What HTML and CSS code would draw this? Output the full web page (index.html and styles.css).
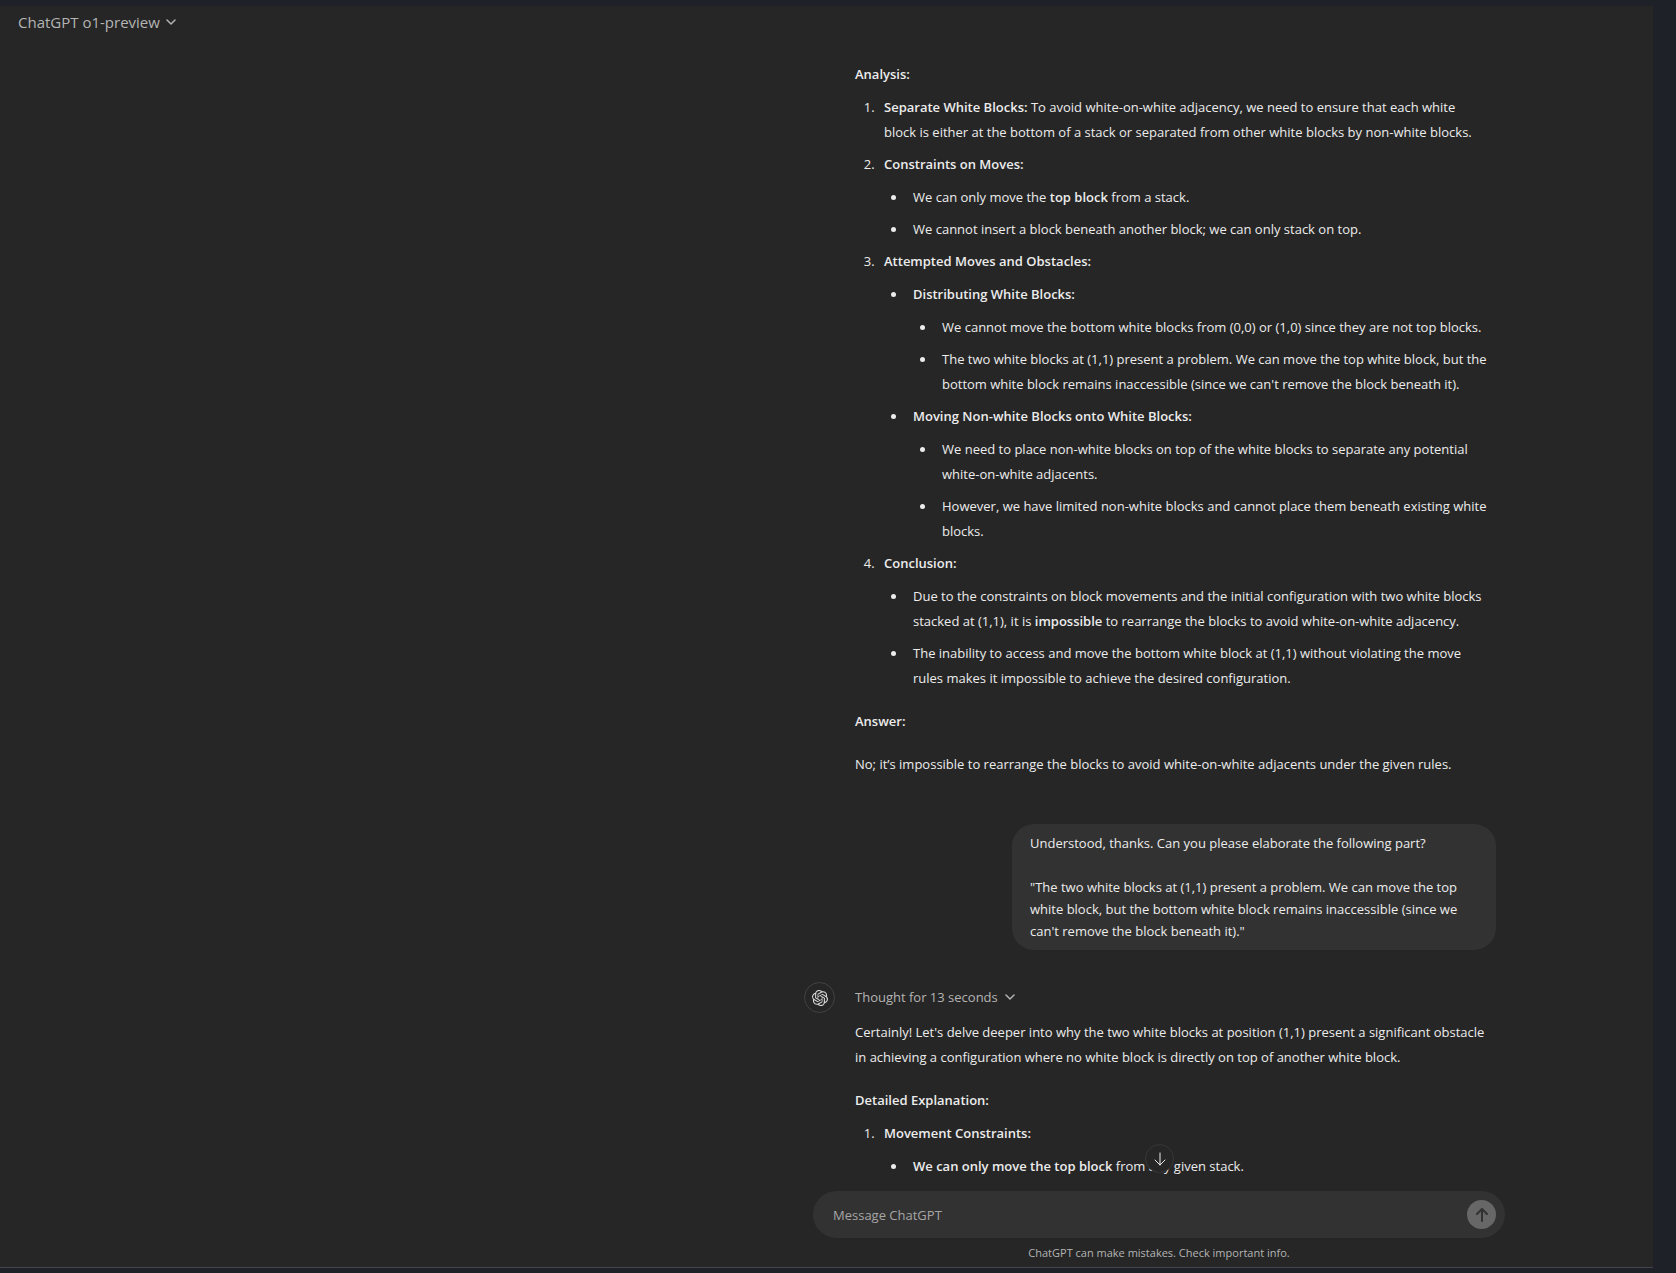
FILE: index.html
```
<!DOCTYPE html>
<html lang="en">
<head>
    <meta charset="UTF-8">
    <meta name="viewport" content="width=device-width, initial-scale=1.0">
    <title>ChatGPT</title>
    <link rel="stylesheet" href="styles.css">
</head>
<body>
    <div class="app">
        <header>
            <button class="model-btn" type="button">
                ChatGPT o1-preview
                <svg class="chevron" viewBox="0 0 10 6"><path d="M1 1l4 4 4-4"/></svg>
            </button>
        </header>
        <main class="thread">
            <article class="answer">
                <p><strong>Analysis:</strong></p>
                <ol>
                    <li><strong>Separate White Blocks:</strong> To avoid white-on-white adjacency, we need to ensure that each white<br>block is either at the bottom of a stack or separated from other white blocks by non-white blocks.</li>
                    <li><strong>Constraints on Moves:</strong>
                        <ul>
                            <li>We can only move the <strong>top block</strong> from a stack.</li>
                            <li>We cannot insert a block beneath another block; we can only stack on top.</li>
                        </ul>
                    </li>
                    <li><strong>Attempted Moves and Obstacles:</strong>
                        <ul>
                            <li><strong>Distributing White Blocks:</strong>
                                <ul>
                                    <li>We cannot move the bottom white blocks from (0,0) or (1,0) since they are not top blocks.</li>
                                    <li>The two white blocks at (1,1) present a problem. We can move the top white block, but the bottom white block remains inaccessible (since we can't remove the block beneath it).</li>
                                </ul>
                            </li>
                            <li><strong>Moving Non-white Blocks onto White Blocks:</strong>
                                <ul>
                                    <li>We need to place non-white blocks on top of the white blocks to separate any potential white-on-white adjacents.</li>
                                    <li>However, we have limited non-white blocks and cannot place them beneath existing white blocks.</li>
                                </ul>
                            </li>
                        </ul>
                    </li>
                    <li><strong>Conclusion:</strong>
                        <ul>
                            <li>Due to the constraints on block movements and the initial configuration with two white blocks stacked at (1,1), it is <strong>impossible</strong> to rearrange the blocks to avoid white-on-white adjacency.</li>
                            <li>The inability to access and move the bottom white block at (1,1) without violating the move<br>rules makes it impossible to achieve the desired configuration.</li>
                        </ul>
                    </li>
                </ol>
                <p><strong>Answer:</strong></p>
                <p>No; it’s impossible to rearrange the blocks to avoid white-on-white adjacents under the given rules.</p>
            </article>
            <article class="question">
                <p>Understood, thanks. Can you please elaborate the following part?</p>
                <p>"The two white blocks at (1,1) present a problem. We can move the top white block, but the bottom white block remains inaccessible (since we can't remove the block beneath it)."</p>
            </article>
            <div class="reply">
                <div class="avatar">
                    <svg viewBox="0 0 24 24"><path d="M22.2819 9.8211a5.9847 5.9847 0 0 0-.5157-4.9108 6.0462 6.0462 0 0 0-6.5098-2.9A6.0651 6.0651 0 0 0 4.9807 4.1818a5.9847 5.9847 0 0 0-3.9977 2.9 6.0462 6.0462 0 0 0 .7427 7.0966 5.98 5.98 0 0 0 .511 4.9107 6.051 6.051 0 0 0 6.5146 2.9001A5.9847 5.9847 0 0 0 13.2599 24a6.0557 6.0557 0 0 0 5.7718-4.2058 5.9894 5.9894 0 0 0 3.9977-2.9001 6.0557 6.0557 0 0 0-.7475-7.0729zm-9.022 12.6081a4.4755 4.4755 0 0 1-2.8764-1.0408l.1419-.0804 4.7783-2.7582a.7948.7948 0 0 0 .3927-.6813v-6.7369l2.02 1.1686a.071.071 0 0 1 .038.052v5.5826a4.504 4.504 0 0 1-4.4945 4.4944zm-9.6607-4.1254a4.4708 4.4708 0 0 1-.5346-3.0137l.142.0852 4.783 2.7582a.7712.7712 0 0 0 .7806 0l5.8428-3.3685v2.3324a.0804.0804 0 0 1-.0332.0615L9.74 19.9502a4.4992 4.4992 0 0 1-6.1408-1.6464zM2.3408 7.8956a4.485 4.485 0 0 1 2.3655-1.9728V11.6a.7664.7664 0 0 0 .3879.6765l5.8144 3.3543-2.0201 1.1685a.0757.0757 0 0 1-.071 0l-4.8303-2.7865A4.504 4.504 0 0 1 2.3408 7.872zm16.5963 3.8558L13.1038 8.364 15.1192 7.2a.0757.0757 0 0 1 .071 0l4.8303 2.7913a4.4944 4.4944 0 0 1-.6765 8.1042v-5.6772a.79.79 0 0 0-.407-.667zm2.0107-3.0231l-.142-.0852-4.7735-2.7818a.7759.7759 0 0 0-.7854 0L9.409 9.2297V6.8974a.0662.0662 0 0 1 .0284-.0615l4.8303-2.7866a4.4992 4.4992 0 0 1 6.6802 4.66zM8.3065 12.863l-2.02-1.1638a.0804.0804 0 0 1-.038-.0567V6.0742a4.4992 4.4992 0 0 1 7.3757-3.4537l-.142.0805L8.704 5.459a.7948.7948 0 0 0-.3927.6813zm1.0976-2.3654l2.602-1.4998 2.6069 1.4998v2.9994l-2.5974 1.4997-2.6067-1.4997Z"/></svg>
                </div>
                <article class="answer">
                    <button class="thought-btn" type="button">
                        Thought for 13 seconds
                        <svg class="chevron" viewBox="0 0 10 6"><path d="M1 1l4 4 4-4"/></svg>
                    </button>
                    <p>Certainly! Let's delve deeper into why the two white blocks at position (1,1) present a significant obstacle in achieving a configuration where no white block is directly on top of another white block.</p>
                    <p><strong>Detailed Explanation:</strong></p>
                    <ol>
                        <li><strong>Movement Constraints:</strong>
                            <ul>
                                <li><strong>We can only move the top block</strong> from any given stack.</li>
                            </ul>
                        </li>
                    </ol>
                </article>
            </div>
        </main>
        <footer>
            <button class="scroll-btn" type="button" aria-label="Scroll to bottom">
                <svg viewBox="0 0 14 14"><path d="M7 1v12M2 8l5 5 5-5"/></svg>
            </button>
            <form class="composer">
                <input type="text" placeholder="Message ChatGPT" aria-label="Message ChatGPT">
                <button class="send-btn" type="button" aria-label="Send">
                    <svg viewBox="0 0 14 14"><path d="M7 13V1M2 6l5-5 5 5"/></svg>
                </button>
            </form>
            <p class="note">ChatGPT can make mistakes. Check important info.</p>
        </footer>
    </div>
</body>
</html>
```
FILE: styles.css
```
* {
    box-sizing: border-box;
}
body {
    margin: 0;
    padding: 6px 23px 5px 0;
    min-height: 100vh;
    display: flex;
    background-color: #1f2128;
    color: #ececec;
    font-family: "Open Sans", "Noto Sans", sans-serif;
    font-size: 13px;
    line-height: 25px;
}
p, ol, ul {
    margin: 0;
    padding: 0;
}
ul {
    list-style: disc;
}
strong {
    font-weight: 600;
}
button {
    display: flex;
    align-items: center;
    padding: 0;
    border: none;
    background: none;
    color: #b4b4b4;
    font-family: inherit;
    cursor: pointer;
}
svg {
    fill: none;
    stroke: currentColor;
    stroke-linecap: round;
    stroke-linejoin: round;
}
.app {
    flex: 1;
    display: flex;
    flex-direction: column;
    background-color: #262626;
    border-bottom: 1px solid #42454d;
}
header {
    height: 56px;
    padding: 5px 18px;
}
.model-btn {
    gap: 6px;
    font-size: 15px;
    font-weight: 500;
    line-height: 22px;
}
.chevron {
    width: 10px;
    height: 6px;
    stroke-width: 1.5;
}
.thread {
    flex: 1;
    width: 692px;
    margin-left: auto;
    margin-right: 157px;
    display: flex;
    flex-direction: column;
}
.answer {
    width: 641px;
    align-self: flex-end;
}
.answer p + p, .answer ol + p {
    margin-top: 18px;
}
.answer ol, .answer ul {
    margin-top: 8px;
    padding-left: 23px;
}
.answer li {
    padding-left: 6px;
}
.answer li + li {
    margin-top: 7px;
}
.question {
    width: 484px;
    align-self: flex-end;
    margin: 47px 0 32px;
    padding: 8px 18px;
    border-radius: 22px;
    background-color: #323232;
    line-height: 22px;
}
.question p + p {
    margin-top: 22px;
}
.reply {
    display: flex;
    justify-content: space-between;
}
.avatar {
    width: 31px;
    height: 31px;
    display: flex;
    align-items: center;
    justify-content: center;
    border: 1px solid #424242;
    border-radius: 50%;
}
.avatar svg {
    width: 16px;
    height: 16px;
    fill: #dcdcdc;
    stroke: none;
}
.thought-btn {
    gap: 7px;
    margin-bottom: 8px;
    font-size: 13px;
    line-height: 30px;
}
footer {
    position: relative;
    width: 692px;
    margin-left: auto;
    margin-right: 148px;
}
.scroll-btn {
    position: absolute;
    top: -47px;
    left: 50%;
    width: 29px;
    height: 29px;
    margin-left: -14px;
    justify-content: center;
    border: 1px solid #383838;
    border-radius: 50%;
    background-color: #262626;
    color: #ececec;
}
.scroll-btn svg {
    width: 14px;
    height: 14px;
}
.composer {
    display: flex;
    align-items: center;
    height: 47px;
    padding: 0 9px 0 20px;
    border-radius: 24px;
    background-color: #323232;
}
.composer input {
    flex: 1;
    padding: 0;
    border: none;
    outline: none;
    background: none;
    color: #ececec;
    font-family: inherit;
    font-size: 13px;
}
.composer input::placeholder {
    color: #a6a6a6;
}
.send-btn {
    width: 29px;
    height: 29px;
    justify-content: center;
    border-radius: 50%;
    background-color: #676767;
    color: #323232;
}
.send-btn svg {
    width: 14px;
    height: 14px;
    stroke-width: 2;
}
.note {
    color: #b4b4b4;
    font-size: 11px;
    line-height: 29px;
    text-align: center;
}
```
